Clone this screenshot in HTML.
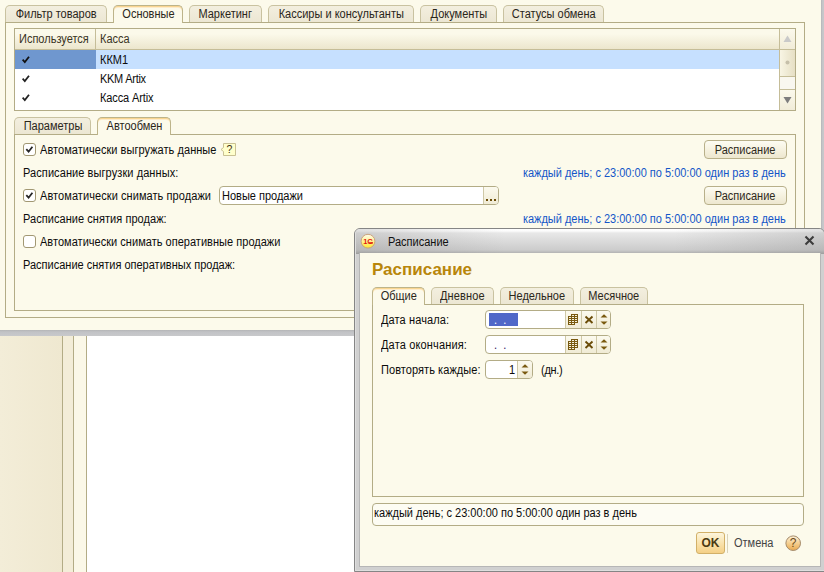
<!DOCTYPE html>
<html><head><meta charset="utf-8">
<style>
*{box-sizing:border-box;margin:0;padding:0}
html,body{width:824px;height:572px;overflow:hidden}
body{position:relative;background:#fff;font-family:"Liberation Sans",sans-serif;font-size:11px;color:#000;line-height:14px}
.a{position:absolute}
.t{position:absolute;white-space:nowrap;line-height:14px;height:14px;color:#0c0c0c;font-size:12px;transform:scaleX(.9167);transform-origin:0 0}
.s{display:block;flex:none;font-size:12px;transform:scaleX(.9167);transform-origin:50% 50%}
#main{left:0;top:0;width:821px;height:330px;background:#fcfaeb}
.tab{display:flex;justify-content:center;position:absolute;height:17px;border:1px solid #c9c2a0;border-bottom:none;border-radius:5px 5px 0 0;background:linear-gradient(#f3efdf,#ece7d3);text-align:center;line-height:16px;color:#2a261a;white-space:nowrap}
.tab.on{background:#fcfaeb;border-color:#bdb48a;height:18px;line-height:16px;z-index:3;box-shadow:inset 0 1px 0 #f9d591,inset 0 2px 0 #fdeccb}
.panel{position:absolute;border:1px solid #b3ac86}
.btn{display:flex;justify-content:center;position:absolute;border:1px solid #b8b08a;border-radius:4px;background:linear-gradient(#fdfcf3,#f6f2e0 50%,#ede7cf);text-align:center;white-space:nowrap;color:#2e2a1c}
.cb{position:absolute;width:13px;height:13px;border:1px solid #a29873;border-radius:3px;background:#fff}
.cb svg{position:absolute;left:0;top:0}
.fld{position:absolute;border:1px solid #b3ac86;border-radius:4px;background:#fff;overflow:hidden}
.fb{position:absolute;top:0;bottom:0;border-left:1px solid #cfc8a6;background:linear-gradient(#fcfaee,#f0ebd5)}
.blue{color:#1456c8;transform-origin:100% 0}
.ln{position:absolute;background:#b3ac86}
</style></head><body>
<div id="main" class="a">
 <!-- top tabs -->
 <div class="tab" style="left:5px;top:5px;width:102px"><span class="s">Фильтр товаров</span></div>
 <div class="tab on" style="left:113px;top:5px;width:70px"><span class="s">Основные</span></div>
 <div class="tab" style="left:189px;top:5px;width:73px"><span class="s">Маркетинг</span></div>
 <div class="tab" style="left:268px;top:5px;width:146px"><span class="s">Кассиры и консультанты</span></div>
 <div class="tab" style="left:420px;top:5px;width:77px"><span class="s">Документы</span></div>
 <div class="tab" style="left:503px;top:5px;width:101px"><span class="s">Статусы обмена</span></div>
 <div class="panel" style="left:5px;top:22px;width:800px;height:296px"></div>

 <!-- table -->
 <div class="panel" style="left:14px;top:28px;width:782px;height:83px;background:#fff">
  <div class="a" style="left:0;top:0;width:764px;height:21px;background:linear-gradient(#fbf9ea 0%,#fbf9ea 25%,#ece6cd 100%);border-bottom:1px solid #c5bd98"></div>
  <div class="a" style="left:80px;top:0;width:1px;height:20px;background:#c5bd98"></div>
  <div class="t" style="left:4px;top:3px;color:#3a3424">Используется</div>
  <div class="t" style="left:85px;top:3px;color:#3a3424">Касса</div>
  <div class="a" style="left:0;top:21px;width:81px;height:19px;background:#6f97cf"></div>
  <div class="a" style="left:81px;top:21px;width:683px;height:19px;background:#c6e0ff"></div>
  <svg class="a" style="left:7px;top:27px" width="9" height="8" viewBox="0 0 9 8"><path d="M0.6 3.6 L2.8 6 L7 0.8" stroke="#111" stroke-width="1.8" fill="none"/></svg>
  <svg class="a" style="left:7px;top:46px" width="9" height="8" viewBox="0 0 9 8"><path d="M0.6 3.6 L2.8 6 L7 0.8" stroke="#222" stroke-width="1.8" fill="none"/></svg>
  <svg class="a" style="left:7px;top:65px" width="9" height="8" viewBox="0 0 9 8"><path d="M0.6 3.6 L2.8 6 L7 0.8" stroke="#222" stroke-width="1.8" fill="none"/></svg>
  <div class="t" style="left:85px;top:24px">ККМ1</div>
  <div class="t" style="left:85px;top:43px;letter-spacing:-0.3px">KKM Artix</div>
  <div class="t" style="left:85px;top:62px;letter-spacing:-0.12px">Касса Artix</div>
  <!-- scrollbar -->
  <div class="a" style="left:764px;top:0;width:16px;height:81px;background:#f9f7ef;border-left:1px solid #c5bd98"></div>
  <div class="a" style="left:765px;top:0;width:15px;height:21px;background:linear-gradient(#fbf9ec,#f1ecd8);border-bottom:1px solid #c5bd98"></div>
  <div class="a" style="left:765px;top:21px;width:15px;height:27px;background:linear-gradient(90deg,#f8f5e4,#e6dfc4);border-bottom:1px solid #c5bd98"></div>
  <div class="a" style="left:765px;top:60px;width:15px;height:21px;background:linear-gradient(#fbf9ec,#f1ecd8);border-top:1px solid #c5bd98"></div>
  <svg class="a" style="left:765px;top:0" width="15" height="81" viewBox="0 0 15 81"><path d="M3.5 13 L7.5 6.5 L11.5 13 Z" fill="#c9c9c9"/><circle cx="7.5" cy="33.5" r="2" fill="#c6c0aa"/><path d="M3.5 68 L11.5 68 L7.5 74.5 Z" fill="#7d7d7d"/></svg>
 </div>

 <!-- inner tabs -->
 <div class="tab" style="left:14px;top:117px;width:77px"><span class="s">Параметры</span></div>
 <div class="tab on" style="left:97px;top:117px;width:74px"><span class="s">Автообмен</span></div>
 <div class="panel" style="left:14px;top:134px;width:782px;height:177px"></div>

 <div class="cb" style="left:23px;top:143px"><svg width="11" height="11" viewBox="0 0 11 11"><path d="M2.3 5.2 L4.6 7.7 L8.4 2.8" stroke="#262626" stroke-width="1.8" fill="none"/></svg></div>
 <div class="t" style="left:40px;top:143px;letter-spacing:0.05px">Автоматически выгружать данные</div>
 <svg class="a" style="left:220px;top:143px" width="16" height="13" viewBox="0 0 16 13"><path d="M3.5 0.5 H15.5 V12.5 H3.5 V8.5 L1 6.5 L3.5 4.5 Z" fill="#ffffcc" stroke="#c9c193" stroke-width="1"/><text x="9.5" y="10.2" font-size="10.5" font-family="Liberation Sans, sans-serif" fill="#3f3210" text-anchor="middle">?</text></svg>
 <div class="t" style="left:23px;top:166px;letter-spacing:0.09px">Расписание выгрузки данных:</div>
 <div class="cb" style="left:23px;top:189px"><svg width="11" height="11" viewBox="0 0 11 11"><path d="M2.3 5.2 L4.6 7.7 L8.4 2.8" stroke="#262626" stroke-width="1.8" fill="none"/></svg></div>
 <div class="t" style="left:40px;top:189px;letter-spacing:0.08px">Автоматически снимать продажи</div>
 <div class="fld" style="left:219px;top:186px;width:280px;height:19px">
  <div class="t" style="left:2px;top:2px">Новые продажи</div>
  <div class="fb" style="left:263px;width:15px"></div>
  <div class="a" style="left:266px;top:12px;width:2px;height:2px;background:#6b4c08"></div>
  <div class="a" style="left:270px;top:12px;width:2px;height:2px;background:#6b4c08"></div>
  <div class="a" style="left:274px;top:12px;width:2px;height:2px;background:#6b4c08"></div>
 </div>
 <div class="t" style="left:23px;top:212px;letter-spacing:0.06px">Расписание снятия продаж:</div>
 <div class="cb" style="left:23px;top:235px"></div>
 <div class="t" style="left:40px;top:235px;letter-spacing:0.03px">Автоматически снимать оперативные продажи</div>
 <div class="t" style="left:23px;top:258px">Расписание снятия оперативных продаж:</div>

 <div class="btn" style="left:704px;top:140px;width:83px;height:19px;line-height:19px"><span class="s">Расписание</span></div>
 <div class="btn" style="left:704px;top:186px;width:83px;height:19px;line-height:19px"><span class="s">Расписание</span></div>
 <div class="t blue" style="right:35px;top:166px">каждый день; с 23:00:00 по 5:00:00 один раз в день</div>
 <div class="t blue" style="right:35px;top:212px">каждый день; с 23:00:00 по 5:00:00 один раз в день</div>
</div>

<!-- lower background of parent app -->
<div class="a" style="left:0;top:330px;width:824px;height:6px;background:linear-gradient(#b4b5b7 0,#c2c3c6 2px,#c8c9cb 100%)"></div>
<div class="a" style="left:0;top:336px;width:62px;height:236px;background:linear-gradient(90deg,#f3edd8,#efe8d0)"></div>
<div class="ln" style="left:62px;top:336px;width:1px;height:236px"></div>
<div class="a" style="left:63px;top:336px;width:10px;height:236px;background:#f3edd8"></div>
<div class="ln" style="left:73px;top:336px;width:1px;height:236px"></div>
<div class="a" style="left:74px;top:336px;width:12px;height:236px;background:#fbf8e8"></div>
<div class="ln" style="left:86px;top:336px;width:1px;height:236px"></div>
<div class="a" style="left:821px;top:0;width:3px;height:336px;background:linear-gradient(90deg,#b4b5b7 0,#c4c5c8 1.5px,#c8c9cb 100%)"></div>

<!-- dialog frame -->
<div class="a" style="left:354px;top:228px;width:471px;height:344px;border:1px solid #858585;border-radius:6px 6px 0 0;background:#d0d0d0;overflow:hidden">
 <div class="a" style="left:0;top:0;width:469px;height:25px;background:linear-gradient(90deg,rgba(110,110,110,.22),rgba(110,110,110,0) 32%,rgba(110,110,110,0) 68%,rgba(110,110,110,.2)),linear-gradient(#ffffff 0,#fcfcfc 2px,#e8e8e8 4px,#dedede 10px,#cccccc 21px,#bcbcbc 23px,#a8a8a8 25px)"></div>
 <div class="a" style="left:0;top:3px;width:1px;height:338px;background:#dedede"></div>
 <div class="a" style="left:0;top:341px;width:469px;height:1px;background:#dedede"></div>
 <div class="a" style="left:4px;top:24px;width:462px;height:314px;border:1px solid #b6b6b6;border-top:none;background:#fcfaeb"></div>
</div>
<!-- 1C icon -->
<svg class="a" style="left:360px;top:233px" width="16" height="16" viewBox="0 0 16 16"><defs><linearGradient id="g1" x1="0" y1="0" x2="0" y2="1"><stop offset="0" stop-color="#fffdf0"/><stop offset="0.45" stop-color="#fff29a"/><stop offset="1" stop-color="#ffe830"/></linearGradient></defs><circle cx="8" cy="8.2" r="6.9" fill="url(#g1)" stroke="#c9a27c" stroke-width="1"/><text x="7.8" y="10.6" style="font-family:'Liberation Sans',sans-serif;font-size:7.5px;font-weight:bold;letter-spacing:-0.3px" fill="#e01810" text-anchor="middle">1C</text><path d="M8.6 9.9 H13" stroke="#e01810" stroke-width="1.3"/></svg>
<div class="t" style="left:388px;top:235px;color:#101010">Расписание</div>
<svg class="a" style="left:804px;top:235px" width="11" height="11" viewBox="0 0 11 11"><path d="M1.5 1.5 L9.5 9.5 M9.5 1.5 L1.5 9.5" stroke="#3c3c3c" stroke-width="2.1" fill="none"/></svg>
<div class="t" style="left:372px;top:260px;font-size:17px;font-weight:bold;color:#b8860b;line-height:20px;height:20px;transform:none">Расписание</div>

<div class="tab on" style="left:372px;top:287px;width:53px"><span class="s">Общие</span></div>
<div class="tab" style="left:431px;top:287px;width:63px;letter-spacing:0.14px"><span class="s">Дневное</span></div>
<div class="tab" style="left:500px;top:287px;width:74px"><span class="s">Недельное</span></div>
<div class="tab" style="left:580px;top:287px;width:68px"><span class="s">Месячное</span></div>
<div class="panel" style="left:372px;top:304px;width:432px;height:193px"></div>
<div class="t" style="left:381px;top:313px;letter-spacing:0.12px">Дата начала:</div>
<div class="t" style="left:381px;top:338px;letter-spacing:0.17px">Дата окончания:</div>
<div class="t" style="left:381px;top:363px;letter-spacing:0.07px">Повторять каждые:</div>

<div class="fld" style="left:485px;top:310px;width:126px;height:19px">
 <div class="a" style="left:3px;top:2px;width:29px;height:13px;background:#5068c8"></div>
 <div class="t" style="left:8px;top:2px;color:#fff;letter-spacing:6.7px">..</div>
 <div class="fb" style="left:79px;width:46px"></div>
 <div class="a" style="left:95px;top:0;width:1px;height:17px;background:#cfc8a6"></div>
 <div class="a" style="left:110px;top:0;width:1px;height:17px;background:#cfc8a6"></div>
 <svg class="a" style="left:80px;top:0" width="45" height="17" viewBox="0 0 45 17" shape-rendering="crispEdges"><g fill="#7a5a10"><path d="M5 3h7v9h-7z M2 5h7v9h-7z"/></g><g fill="#f6f2de"><path d="M6 4h2v1h-2z M9 4h2v1h-2z M9 6h2v1h-2z M9 8h2v1h-2z M9 10h2v1h-2z M3 6h2v1h-2z M6 6h2v1h-2z M3 8h2v1h-2z M6 8h2v1h-2z M3 10h2v1h-2z M6 10h2v1h-2z M3 12h2v1h-2z M6 12h2v1h-2z"/></g><g shape-rendering="auto"><path d="M19.5 5.5 L26.5 12 M26.5 5.5 L19.5 12" stroke="#6b4c08" stroke-width="1.9" fill="none"/><path d="M34.5 6.5 L38 3.2 L41.5 6.5 Z M34.5 10.5 L41.5 10.5 L38 13.8 Z" fill="#7a5a10"/></g></svg>
</div>
<div class="fld" style="left:485px;top:335px;width:126px;height:19px">
 <div class="t" style="left:8px;top:2px;color:#302060;letter-spacing:6.7px">..</div>
 <div class="fb" style="left:79px;width:46px"></div>
 <div class="a" style="left:95px;top:0;width:1px;height:17px;background:#cfc8a6"></div>
 <div class="a" style="left:110px;top:0;width:1px;height:17px;background:#cfc8a6"></div>
 <svg class="a" style="left:80px;top:0" width="45" height="17" viewBox="0 0 45 17" shape-rendering="crispEdges"><g fill="#7a5a10"><path d="M5 3h7v9h-7z M2 5h7v9h-7z"/></g><g fill="#f6f2de"><path d="M6 4h2v1h-2z M9 4h2v1h-2z M9 6h2v1h-2z M9 8h2v1h-2z M9 10h2v1h-2z M3 6h2v1h-2z M6 6h2v1h-2z M3 8h2v1h-2z M6 8h2v1h-2z M3 10h2v1h-2z M6 10h2v1h-2z M3 12h2v1h-2z M6 12h2v1h-2z"/></g><g shape-rendering="auto"><path d="M19.5 5.5 L26.5 12 M26.5 5.5 L19.5 12" stroke="#6b4c08" stroke-width="1.9" fill="none"/><path d="M34.5 6.5 L38 3.2 L41.5 6.5 Z M34.5 10.5 L41.5 10.5 L38 13.8 Z" fill="#7a5a10"/></g></svg>
</div>
<div class="fld" style="left:485px;top:360px;width:48px;height:19px">
 <div class="t" style="left:23px;top:2px">1</div>
 <div class="fb" style="left:31px;width:15px"></div>
 <svg class="a" style="left:32px;top:0" width="14" height="17" viewBox="0 0 14 17"><path d="M3.5 6.5 L7 3.2 L10.5 6.5 Z M3.5 10.5 L10.5 10.5 L7 13.8 Z" fill="#7a5a10"/></svg>
</div>
<div class="t" style="left:541px;top:363px;letter-spacing:-0.3px">(дн.)</div>

<div class="fld" style="left:372px;top:503px;width:432px;height:23px;background:#fdfcf3"></div>
<div class="t" style="left:374px;top:506px">каждый день; с 23:00:00 по 5:00:00 один раз в день</div>
<div class="a" style="left:696px;top:532px;width:29px;height:22px;border:1px solid #d2b068;border-radius:3px;background:linear-gradient(#fdf5dc,#f9e3ae 50%,#f4d086);text-align:center;font-weight:bold;font-size:12px;line-height:20px;color:#4b3a12">OK</div>
<div class="a" style="left:727px;top:534px;width:1px;height:19px;background:#d9d3ba"></div>
<div class="t" style="left:734px;top:536px;color:#444">Отмена</div>
<svg class="a" style="left:785px;top:535px" width="17" height="17" viewBox="0 0 17 17"><defs><linearGradient id="g2" x1="0" y1="0" x2="0" y2="1"><stop offset="0" stop-color="#fdf0d8"/><stop offset="0.5" stop-color="#f5cf90"/><stop offset="1" stop-color="#e9a94e"/></linearGradient></defs><circle cx="8.2" cy="8.2" r="7.3" fill="url(#g2)" stroke="#a58b6b" stroke-width="1"/><text x="8.2" y="12.2" font-family="Liberation Sans, sans-serif" font-size="12" fill="#6b4a1a" text-anchor="middle">?</text></svg>
</body></html>
